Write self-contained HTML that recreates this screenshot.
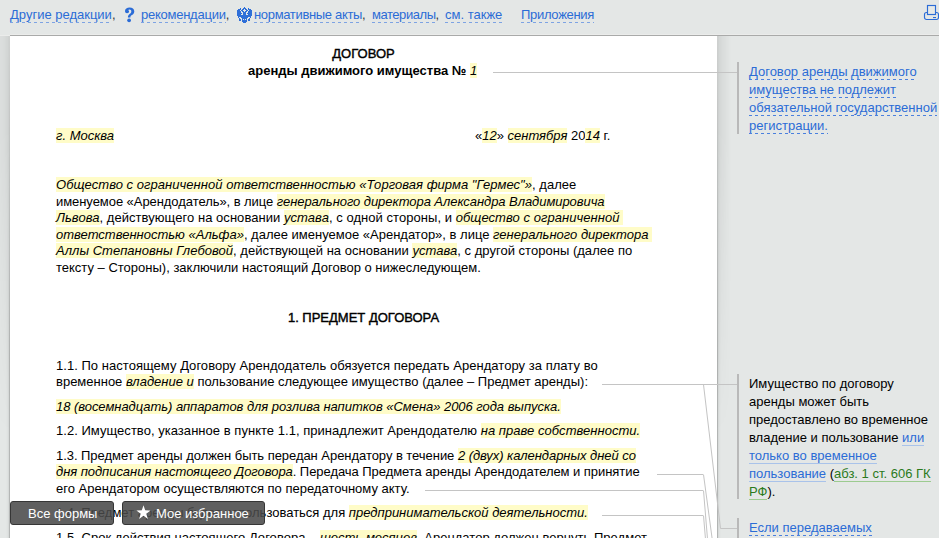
<!DOCTYPE html>
<html><head><meta charset="utf-8">
<style>
html,body{margin:0;padding:0}
body{width:939px;height:538px;overflow:hidden;position:relative;background:#e4e7e6;font-family:"Liberation Sans",sans-serif;font-size:13px;color:#000}
.a{position:absolute;white-space:nowrap;line-height:16px}
.l{color:#2b6cd6}
.d{display:inline-block;height:16px;background-image:linear-gradient(to right,#7da3e3 50%,transparent 50%);background-size:6px 1px;background-repeat:repeat-x;background-position:0 15px}
.c{color:#3a3a3a}
.d2{background-image:linear-gradient(to right,#4a80de 50%,transparent 50%)}
.h{background:#fffcc8}
i{font-style:italic}
b{font-weight:bold}
.md{-webkit-text-stroke:0.4px #000}
#top{position:absolute;left:0;top:0;width:939px;height:35px;background:#e4e7e6}
#tline{position:absolute;left:10px;top:35px;width:929px;height:1px;background:#a9aaa9}
#tline2{position:absolute;left:10px;top:34px;width:929px;height:1px;background:#ebeceb}
#tline3{position:absolute;left:0;top:35px;width:10px;height:1px;background:#ebeceb}
#page{position:absolute;left:10px;top:36px;width:707px;height:502px;background:#fff}
.shw{position:absolute;top:36px;height:502px}
#lsh1{left:0;width:10px;background:linear-gradient(to left,rgba(0,0,0,0.08),rgba(0,0,0,0.03));-webkit-mask-image:linear-gradient(to bottom,#000 0px,#000 90px,transparent 400px)}
#lsh2{left:6px;width:3px;background:linear-gradient(to left,rgba(0,0,0,0.07),rgba(0,0,0,0.02) 50%,rgba(0,0,0,0));-webkit-mask-image:linear-gradient(to bottom,rgba(0,0,0,0.25) 0px,#000 320px)}
#lsh3{left:9px;width:1px;background:linear-gradient(to bottom,rgba(0,0,0,0.02) 0px,rgba(0,0,0,0.21) 320px)}
#rsh1{left:717px;width:14px;background:linear-gradient(to right,rgba(0,0,0,0.08),rgba(0,0,0,0));-webkit-mask-image:linear-gradient(to bottom,#000 0px,#000 90px,transparent 400px)}
#rsh2{left:718px;width:3px;background:linear-gradient(to right,rgba(0,0,0,0.07),rgba(0,0,0,0.02) 50%,rgba(0,0,0,0));-webkit-mask-image:linear-gradient(to bottom,rgba(0,0,0,0.25) 0px,#000 320px)}
#rsh3{left:717px;width:1px;background:linear-gradient(to bottom,rgba(0,0,0,0.02) 0px,rgba(0,0,0,0.22) 320px)}
.bar{position:absolute;left:737px;width:2px;background:#b9b9b9}
.hl{position:absolute;height:1px;background:#c4c4c4}
.btn{position:absolute;top:501px;height:22px;background:rgba(73,73,73,0.875);border:1px solid #363636;border-radius:3px;color:#fff;font-size:13px;line-height:16px;box-sizing:content-box}
.btn span{position:absolute;top:4px;white-space:nowrap}
.s{color:#000}
.ul{border-bottom:1px solid #a9c3ea}
.g{color:#2b7a1c}
.ug{border-bottom:1px solid #9ccb90}
</style></head><body>
<div id="top"></div>
<div id="tline2"></div><div id="tline"></div><div id="tline3"></div>
<div class="shw" id="lsh1"></div><div class="shw" id="lsh2"></div><div class="shw" id="lsh3"></div>
<div id="page"></div>
<div class="shw" id="rsh1"></div><div class="shw" id="rsh2"></div><div class="shw" id="rsh3"></div>

<!-- top bar links -->
<div class="a" style="left:10px;top:7px"><span class="l d">Другие редакции</span><span class="c">,</span></div>
<svg style="position:absolute;left:124px;top:7px" width="11" height="16" viewBox="0 0 11 16"><g fill="#2b6cd6"><path d="M5.6 0.6 C8.4 0.6 10.3 2.2 10.3 4.5 C10.3 6.6 8.8 7.5 7.5 8.3 C6.6 8.9 6.4 9.4 6.4 10.6 L3.9 10.6 C3.9 8.7 4.5 7.8 5.6 7 C6.6 6.2 7.3 5.6 7.3 4.4 C7.3 3.2 6.6 2.5 5.5 2.5 C4.8 2.5 4.4 2.8 4.2 3.2 C4.9 3.5 5.1 4 5.1 4.6 C5.1 5.6 4.2 6.3 3.1 6.3 C1.9 6.3 1 5.5 1 4.1 C1 2 3 0.6 5.6 0.6 Z"/><circle cx="5.1" cy="13.3" r="1.9"/></g></svg>
<div class="a" style="left:141px;top:7px"><span class="l d" style="letter-spacing:-0.25px">рекомендации</span><span class="c">,</span></div>
<svg style="position:absolute;left:236px;top:6px" width="16" height="18" viewBox="0 0 16 18" shape-rendering="crispEdges"><g fill="#2f6fd8"><rect x="8" y="1" width="1" height="1"/><rect x="4" y="2" width="1" height="1"/><rect x="7" y="2" width="3" height="1"/><rect x="12" y="2" width="1" height="1"/><rect x="2" y="3" width="3" height="1"/><rect x="6" y="3" width="2" height="1"/><rect x="9" y="3" width="2" height="1"/><rect x="12" y="3" width="3" height="1"/><rect x="1" y="4" width="3" height="1"/><rect x="5" y="4" width="2" height="1"/><rect x="10" y="4" width="2" height="1"/><rect x="13" y="4" width="3" height="1"/><rect x="1" y="5" width="4" height="1"/><rect x="6" y="5" width="2" height="1"/><rect x="9" y="5" width="2" height="1"/><rect x="12" y="5" width="4" height="1"/><rect x="1" y="6" width="4" height="1"/><rect x="7" y="6" width="3" height="1"/><rect x="12" y="6" width="4" height="1"/><rect x="1" y="7" width="5" height="1"/><rect x="7" y="7" width="3" height="1"/><rect x="11" y="7" width="5" height="1"/><rect x="1" y="8" width="4" height="1"/><rect x="7" y="8" width="3" height="1"/><rect x="12" y="8" width="4" height="1"/><rect x="1" y="9" width="15" height="1"/><rect x="2" y="10" width="13" height="1"/><rect x="2" y="11" width="1" height="1"/><rect x="5" y="11" width="7" height="1"/><rect x="14" y="11" width="1" height="1"/><rect x="3" y="12" width="1" height="1"/><rect x="6" y="12" width="5" height="1"/><rect x="13" y="12" width="1" height="1"/><rect x="3" y="13" width="2" height="1"/><rect x="6" y="13" width="1" height="1"/><rect x="8" y="13" width="1" height="1"/><rect x="10" y="13" width="1" height="1"/><rect x="12" y="13" width="2" height="1"/><rect x="3" y="14" width="2" height="1"/><rect x="6" y="14" width="5" height="1"/><rect x="12" y="14" width="2" height="1"/><rect x="6" y="15" width="5" height="1"/><rect x="7" y="16" width="3" height="1"/></g></svg>
<div class="a" style="left:254px;top:7px"><span class="l d" style="letter-spacing:-0.33px">нормативные акты</span><span class="c">,</span></div>
<div class="a" style="left:372px;top:7px"><span class="l d" style="letter-spacing:-0.45px">материалы</span><span class="c">,</span></div>
<div class="a" style="left:445px;top:7px"><span class="l d">см. также</span></div>
<div class="a" style="left:521px;top:7px"><span class="l d" style="letter-spacing:-0.3px">Приложения</span></div>
<svg style="position:absolute;left:923px;top:4px" width="16" height="17" viewBox="0 0 16 17"><g fill="none" stroke="#2b6cd6" stroke-width="1.15"><rect x="1.5" y="8.5" width="14" height="7" rx="2"/><rect x="4.5" y="1.5" width="8" height="9" fill="#e6e9e8"/></g><rect x="10" y="13" width="3" height="1.1" fill="#2b6cd6"/></svg>

<!-- document -->
<div class="a" style="left:0;width:727px;text-align:center;top:46px"><span class="md">ДОГОВОР</span></div>
<div class="a" style="left:248px;top:63px"><b>аренды движимого имущества №</b> <i class="h">1</i></div>
<div class="hl" style="left:493px;top:72px;width:244px"></div>

<div class="a" style="left:56px;top:128px"><i class="h">г. Москва</i></div>
<div class="a" style="left:475px;top:128px">«<i class="h">12</i>» <i class="h">сентября</i> 20<i class="h">14</i> г.</div>

<div class="a" style="left:56px;top:177px;letter-spacing:0.04px"><i class="h">Общество с ограниченной ответственностью «Торговая фирма "Гермес"»</i>, далее</div>
<div class="a" style="left:56px;top:194px;letter-spacing:-0.06px">именуемое «Арендодатель», в лице <i class="h">генерального директора Александра Владимировича</i></div>
<div class="a" style="left:56px;top:210px;letter-spacing:0.047px"><i class="h">Львова</i>, действующего на основании <i class="h">устава</i>, с одной стороны, и <i class="h">общество с ограниченной&nbsp;</i></div>
<div class="a" style="left:56px;top:227px"><i class="h">ответственностью «Альфа»</i>, далее именуемое «Арендатор», в лице <i class="h">генерального директора&nbsp;</i></div>
<div class="a" style="left:56px;top:243px;letter-spacing:0.025px"><i class="h">Аллы Степановны Глебовой</i>, действующей на основании <i class="h">устава</i>, с другой стороны (далее по</div>
<div class="a" style="left:56px;top:260px">тексту – Стороны), заключили настоящий Договор о нижеследующем.</div>

<div class="a" style="left:0;width:727px;text-align:center;top:310px"><span class="md">1. ПРЕДМЕТ ДОГОВОРА</span></div>

<div class="a" style="left:56px;top:358px;letter-spacing:0.036px">1.1. По настоящему Договору Арендодатель обязуется передать Арендатору за плату во</div>
<div class="a" style="left:56px;top:374px">временное <i class="h">владение и</i> пользование следующее имущество (далее – Предмет аренды):</div>
<div class="a" style="left:56px;top:399px;letter-spacing:-0.04px"><i class="h">18 (восемнадцать) аппаратов для розлива напитков «Смена» 2006 года выпуска.</i></div>
<div class="a" style="left:56px;top:423px;letter-spacing:0.034px">1.2. Имущество, указанное в пункте 1.1, принадлежит Арендодателю <i class="h">на праве собственности.</i></div>
<div class="a" style="left:56px;top:448px;letter-spacing:-0.045px">1.3. Предмет аренды должен быть передан Арендатору в течение <i class="h">2 (двух) календарных дней со</i></div>
<div class="a" style="left:56px;top:464px;letter-spacing:-0.05px"><i class="h">дня подписания настоящего Договора</i>. Передача Предмета аренды Арендодателем и принятие</div>
<div class="a" style="left:56px;top:481px">его Арендатором осуществляются по передаточному акту.</div>
<div class="a" style="left:56px;top:505px">1.4. Предмет аренды будет использоваться для <i class="h">предпринимательской деятельности.</i></div>
<div class="a" style="left:56px;top:530px;letter-spacing:0.034px">1.5. Срок действия настоящего Договора – <i class="h">шесть месяцев</i>. Арендатор должен вернуть Предмет</div>

<!-- connectors -->
<div class="hl" style="left:602px;top:384px;width:135px"></div>
<div class="hl" style="left:657px;top:474px;width:46px"></div>
<div class="hl" style="left:425px;top:490px;width:278px"></div>
<div class="hl" style="left:602px;top:515px;width:101px"></div>
<svg style="position:absolute;left:0;top:0" width="939" height="538"><g stroke="#c4c4c4" stroke-width="1" fill="none">
<path d="M703.5 384.5 L720.5 528.5 L737 528.5"/>
<path d="M703.5 474.5 L713 545"/>
<path d="M703.5 490.5 L708 545"/>
<path d="M703.5 515.5 L706 545"/>
</g></svg>

<!-- sidebar notes -->
<div class="bar" style="top:62px;height:72px"></div>
<div class="a" style="left:749px;top:64px"><span class="l d d2">Договор аренды движимого</span></div>
<div class="a" style="left:749px;top:82px"><span class="l d d2">имущества не подлежит</span></div>
<div class="a" style="left:749px;top:100px"><span class="l d d2">обязательной государственной</span></div>
<div class="a" style="left:749px;top:118px"><span class="l d d2">регистрации.</span></div>

<div class="bar" style="top:374px;height:125px"></div>
<div class="a s" style="left:749px;top:376px">Имущество по договору</div>
<div class="a s" style="left:749px;top:394px">аренды может быть</div>
<div class="a s" style="left:749px;top:412px">предоставлено во временное</div>
<div class="a s" style="left:749px;top:430px">владение и пользование <span class="l ul">или</span></div>
<div class="a s" style="left:749px;top:448px"><span class="l ul">только во временное</span></div>
<div class="a s" style="left:749px;top:466px"><span class="l ul">пользование</span> (<span class="g ug">абз. 1 ст. 606 ГК</span></div>
<div class="a s" style="left:749px;top:484px"><span class="g ug">РФ</span>).</div>

<div class="bar" style="top:518px;height:30px"></div>
<div class="a" style="left:749px;top:520px"><span class="l d d2">Если передаваемых</span></div>

<!-- floating buttons -->
<div class="btn" style="left:10px;width:102px"><span style="left:17px">Все формы</span></div>
<div class="btn" style="left:122px;width:141px"><svg style="position:absolute;left:13px;top:3px" width="15" height="15" viewBox="0 0 14 14"><path fill="#fff" d="M7 0.3 L8.6 5 L13.6 5.1 L9.6 8.1 L11.1 13 L7 10.1 L2.9 13 L4.4 8.1 L0.4 5.1 L5.4 5 Z"/></svg><span style="left:33px">Мое избранное</span></div>
</body></html>
